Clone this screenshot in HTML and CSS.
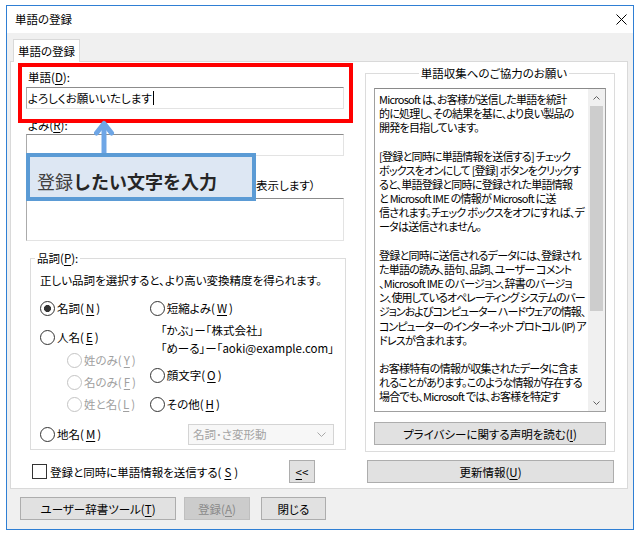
FILE: index.html
```html
<!DOCTYPE html>
<html lang="ja">
<head>
    <meta charset="UTF-8">
    <title>単語の登録</title>
    <link rel="stylesheet" href="styles.css">
</head>
<body>
    <div class="window">
        <div class="titlebar">
            <span class="title">単語の登録</span>
            <svg class="close" width="11" height="11" viewBox="0 0 11 11">
                <path d="M0.5 0.5 L10.5 10.5 M10.5 0.5 L0.5 10.5" stroke="#000" stroke-width="1" fill="none"/>
            </svg>
        </div>

        <div class="client">
            <div class="tab">単語の登録</div>

            <div class="panel">
                <div class="col-left">
                    <label class="lbl">単語(<u>D</u>):</label>
                    <div class="input">よろしくお願いいたします<span class="caret"></span></div>

                    <label class="lbl lbl-yomi">よみ(<u>R</u>):</label>
                    <div class="input input-yomi"></div>

                    <label class="lbl lbl-comment">ユーザー コメント(<u>C</u>):<span class="comment-note">（変換候補の横に表示します）</span></label>
                    <div class="input textarea"></div>

                    <fieldset class="group hinshi">
                        <legend>品詞(<u>P</u>):</legend>
                        <p class="hint">正しい品詞を選択すると、より高い変換精度を得られます。</p>
                        <div class="choices">
                            <div class="choice-col">
                                <div class="radio checked">名詞(<u>N</u>)</div>
                                <div class="radio r-person">人名(<u>E</u>)</div>
                                <div class="radio sub disabled r-sei">姓のみ(<u>Y</u>)</div>
                                <div class="radio sub disabled r-mei">名のみ(<u>F</u>)</div>
                                <div class="radio sub disabled r-seimei">姓と名(<u>L</u>)</div>
                            </div>
                            <div class="choice-col">
                                <div class="radio">短縮よみ(<u>W</u>)</div>
                                <div class="examples">
                                    「かぶ」ー「株式会社」<br>
                                    「めーる」ー「aoki@example.com」
                                </div>
                                <div class="radio r-kao">顔文字(<u>O</u>)</div>
                                <div class="radio r-other">その他(<u>H</u>)</div>
                            </div>
                        </div>
                        <div class="place-row">
                            <div class="radio">地名(<u>M</u>)</div>
                            <div class="select">
                                <span>名詞･さ変形動</span>
                                <svg width="9" height="5" viewBox="0 0 9 5"><path d="M0.5 0.5 L4.5 4.5 L8.5 0.5" stroke="#a8a8a8" fill="none"/></svg>
                            </div>
                        </div>
                    </fieldset>

                    <div class="send-row">
                        <div class="check">登録と同時に単語情報を送信する(<u>S</u>)</div>
                        <button class="btn btn-back"><u>&lt;</u>&lt;</button>
                    </div>
                </div>

                <div class="col-right">
                    <fieldset class="group notice">
                        <legend>単語収集へのご協力のお願い</legend>
                        <div class="notice-box">
                            <div class="notice-text">
                                Microsoft は、お客様が送信した単語を統計<br>
                                的に処理し、その結果を基に、より良い製品の<br>
                                開発を目指しています。<br>
                                <br>
                                [登録と同時に単語情報を送信する] チェック<br>
                                ボックスをオンにして [登録] ボタンをクリックす<br>
                                ると、単語登録と同時に登録された単語情報<br>
                                と Microsoft IME の情報が Microsoft に送<br>
                                信されます。チェック ボックスをオフにすれば、デ<br>
                                ータは送信されません。<br>
                                <br>
                                登録と同時に送信されるデータには、登録され<br>
                                た単語の読み、語句、品詞、ユーザー コメント<br>
                                、Microsoft IME のバージョン、辞書のバージョ<br>
                                <span class="tight">ン、使用しているオペレーティング システムのバー</span><br>
                                <span class="tight">ジョンおよびコンピューター ハードウェアの情報、</span><br>
                                <span class="tight">コンピューターのインターネット プロトコル (IP) ア</span><br>
                                ドレスが含まれます。<br>
                                <br>
                                お客様特有の情報が収集されたデータに含ま<br>
                                れることがあります。このような情報が存在する<br>
                                場合でも、Microsoft では、お客様を特定す
                            </div>
                            <div class="scrollbar">
                                <div class="sb-arrow">
                                    <svg width="7" height="4" viewBox="0 0 7 4"><path d="M0.5 3.5 L3.5 0.5 L6.5 3.5" stroke="#606060" fill="none"/></svg>
                                </div>
                                <div class="sb-thumb"></div>
                                <div class="sb-arrow sb-down">
                                    <svg width="7" height="4" viewBox="0 0 7 4"><path d="M0.5 0.5 L3.5 3.5 L6.5 0.5" stroke="#606060" fill="none"/></svg>
                                </div>
                            </div>
                        </div>
                        <button class="btn btn-privacy">プライバシーに関する声明を読む(<u>I</u>)</button>
                    </fieldset>
                    <button class="btn btn-update">更新情報(<u>U</u>)</button>
                </div>
            </div>

            <div class="actions">
                <button class="btn btn-tool">ユーザー辞書ツール(<u>T</u>)</button>
                <button class="btn btn-add" disabled>登録(<u>A</u>)</button>
                <button class="btn btn-close">閉じる</button>
            </div>
        </div>

        <!-- annotation overlays -->
        <div class="mark-red"></div>
        <svg class="arrow" width="22" height="40" viewBox="0 0 22 40">
            <path d="M10 4 L10 36" stroke="#6ea6e6" stroke-width="5" fill="none"/>
            <path d="M2.5 13 L10 3.5 L17.5 13" stroke="#6ea6e6" stroke-width="5" stroke-linecap="round" stroke-linejoin="round" fill="none"/>
        </svg>
        <div class="callout"><span class="light">登録</span>したい文字を入力</div>
    </div>
</body>
</html>
```

FILE: styles.css
```css
* {
    box-sizing: border-box;
}

body {
    margin: 0;
    background: #fff;
    font-family: "Noto Sans CJK JP", "Noto Sans", sans-serif;
    font-size: 11.5px;
    font-feature-settings: "palt";
    color: #000;
}

u {
    text-decoration-thickness: 1px;
    text-underline-offset: 2px;
}

.window {
    position: relative;
    width: 628px;
    height: 525px;
    margin: 5px 0 0 6px;
    border: 1px solid #2f7fd4;
    background: #f0f0f0;
    display: flex;
    flex-direction: column;
}

.titlebar {
    height: 27px;
    background: #fff;
    display: flex;
    align-items: center;
    padding: 0 6px 0 8px;
}

.title {
    flex: 1;
    line-height: 27px;
}

.client {
    flex: 1;
    padding: 6px 5px 0 3px;
}

.tab {
    position: relative;
    z-index: 1;
    width: 67px;
    height: 23px;
    margin: 0 0 -1px 3px;
    border: 1px solid #d9d9d9;
    border-bottom: none;
    background: #fff;
    text-align: center;
    line-height: 22px;
}

.panel {
    height: 428px;
    border: 1px solid #d9d9d9;
    background: #fff;
    display: flex;
    padding-left: 15px;
}

/* left column */
.col-left {
    width: 318px;
    display: flex;
    flex-direction: column;
    padding-top: 8px;
}

.lbl {
    display: block;
    line-height: 15px;
    padding-left: 2px;
    white-space: nowrap;
}

.lbl-yomi {
    margin-top: 9px;
}

.lbl-comment {
    margin-top: 22px;
}

.comment-note {
    margin-left: 37px;
}

.input {
    height: 22px;
    margin-top: 2px;
    border: 1px solid #e3e3e3;
    border-top-color: #8c8c8c;
    border-left-color: #ababab;
    background: #fff;
    padding-left: 1px;
    line-height: 20px;
    display: flex;
    align-items: center;
}

.input-yomi {
    margin-top: 1px;
}

.textarea {
    height: 43px;
    margin-top: 5px;
}

.caret {
    display: inline-block;
    width: 1px;
    height: 14px;
    background: #000;
    margin-left: 1px;
}

.group {
    margin: 0;
    min-width: 0;
    border: 1px solid #dcdcdc;
}

.group legend {
    padding: 0 2px;
    line-height: 15px;
}

.hinshi {
    width: 316px;
    margin: 10px 0 0 4px;
    padding: 0 11px 4px 9px;
}

.hinshi legend {
    margin-left: -5px;
}

.hint {
    margin: 6px 0 0;
    line-height: 16px;
    white-space: nowrap;
}

.choices {
    display: flex;
    margin-top: 12px;
}

.choice-col {
    display: flex;
    flex-direction: column;
}

.choice-col:first-child {
    width: 117px;
}

.radio {
    display: flex;
    align-items: center;
    height: 16px;
    gap: 2px;
    white-space: nowrap;
}

.radio::before {
    content: "";
    width: 13px;
    height: 13px;
    border: 1px solid #333;
    border-radius: 50%;
    background: #fff;
}

.radio.checked::before {
    background: radial-gradient(circle, #333 0 3.2px, #fff 3.8px);
}

.radio.disabled {
    color: #a0a0a0;
}

.radio.disabled::before {
    border-color: #c4c4c4;
}

.radio.sub {
    margin-left: 27px;
}

.r-person {
    margin-top: 13px;
}

.r-sei {
    margin-top: 7px;
}

.r-mei,
.r-seimei {
    margin-top: 6px;
}

.examples {
    margin: 5px 0 0 11px;
    line-height: 18px;
    white-space: nowrap;
}

.r-kao {
    margin-top: 10px;
}

.r-other {
    margin-top: 13px;
}

.place-row {
    display: flex;
    align-items: center;
    height: 22px;
    margin-top: 11px;
}

.select {
    margin-left: auto;
    width: 146px;
    height: 21px;
    border: 1px solid #d4d4d4;
    background: #f7f7f7;
    color: #a3a3a3;
    display: flex;
    align-items: center;
    justify-content: space-between;
    padding: 0 7px 0 4px;
}

.send-row {
    display: flex;
    align-items: center;
    height: 23px;
    margin-top: 10px;
    padding-left: 6px;
}

.check {
    display: flex;
    align-items: center;
    gap: 3px;
    white-space: nowrap;
}

.check::before {
    content: "";
    width: 13px;
    height: 13px;
    border: 1px solid #333;
    background: #fff;
}

.btn {
    font: inherit;
    font-feature-settings: "palt";
    color: #000;
    background: #e1e1e1;
    border: 1px solid #adadad;
    height: 23px;
    padding: 0;
    white-space: nowrap;
}

.btn:disabled {
    background: #cccccc;
    border-color: #bfbfbf;
    color: #8a8a8a;
}

.btn-back {
    width: 26px;
    margin: 0 29px 0 auto;
}

/* right column */
.col-right {
    width: 250px;
    margin-left: 21px;
    display: flex;
    flex-direction: column;
}

.notice {
    width: 250px;
    margin-top: 4px;
    padding: 0 0 6px 8px;
}

.notice legend {
    margin: 0 auto;
}

.notice-box {
    width: 232px;
    height: 324px;
    margin-top: 7px;
    border: 1px solid #a0a0a0;
    border-top-color: #8a8a8a;
    background: #fff;
    display: flex;
}

.notice-text {
    flex: 1;
    padding: 3px 0 0 4px;
    font-size: 11px;
    letter-spacing: -0.75px;
    line-height: 14.15px;
    white-space: nowrap;
    overflow: hidden;
}

.notice-text .tight {
    letter-spacing: -1px;
}

.scrollbar {
    width: 17px;
    background: #f0f0f0;
    display: flex;
    flex-direction: column;
}

.sb-arrow {
    height: 17px;
    display: flex;
    align-items: center;
    justify-content: center;
}

.sb-down {
    margin-top: auto;
}

.sb-thumb {
    height: 205px;
    margin: 0 2px;
    background: #cdcdcd;
}

.btn-privacy {
    width: 232px;
    margin-top: 10px;
}

.btn-update {
    width: 247px;
    margin: 8px 0 0 2px;
}

/* bottom buttons */
.actions {
    display: flex;
    margin: 8px 0 0 10px;
}

.btn-tool {
    width: 156px;
}

.btn-add {
    width: 66px;
    margin-left: 8px;
}

.btn-close {
    width: 65px;
    margin-left: 11px;
}

/* annotations drawn over the dialog */
.mark-red {
    position: absolute;
    left: 11px;
    top: 57px;
    width: 335px;
    height: 60px;
    border: 4px solid #ff0000;
}

.arrow {
    position: absolute;
    left: 87px;
    top: 114px;
}

.callout {
    position: absolute;
    left: 19px;
    top: 147px;
    width: 230px;
    height: 48px;
    border: 4px solid #5b9bd5;
    background: #dde7f3;
    padding: 11px 0 0 7px;
    font-size: 18px;
    line-height: 26px;
    font-weight: 700;
    color: #262626;
    font-feature-settings: normal;
    white-space: nowrap;
}

.callout .light {
    font-weight: 400;
    color: #404040;
}
```
